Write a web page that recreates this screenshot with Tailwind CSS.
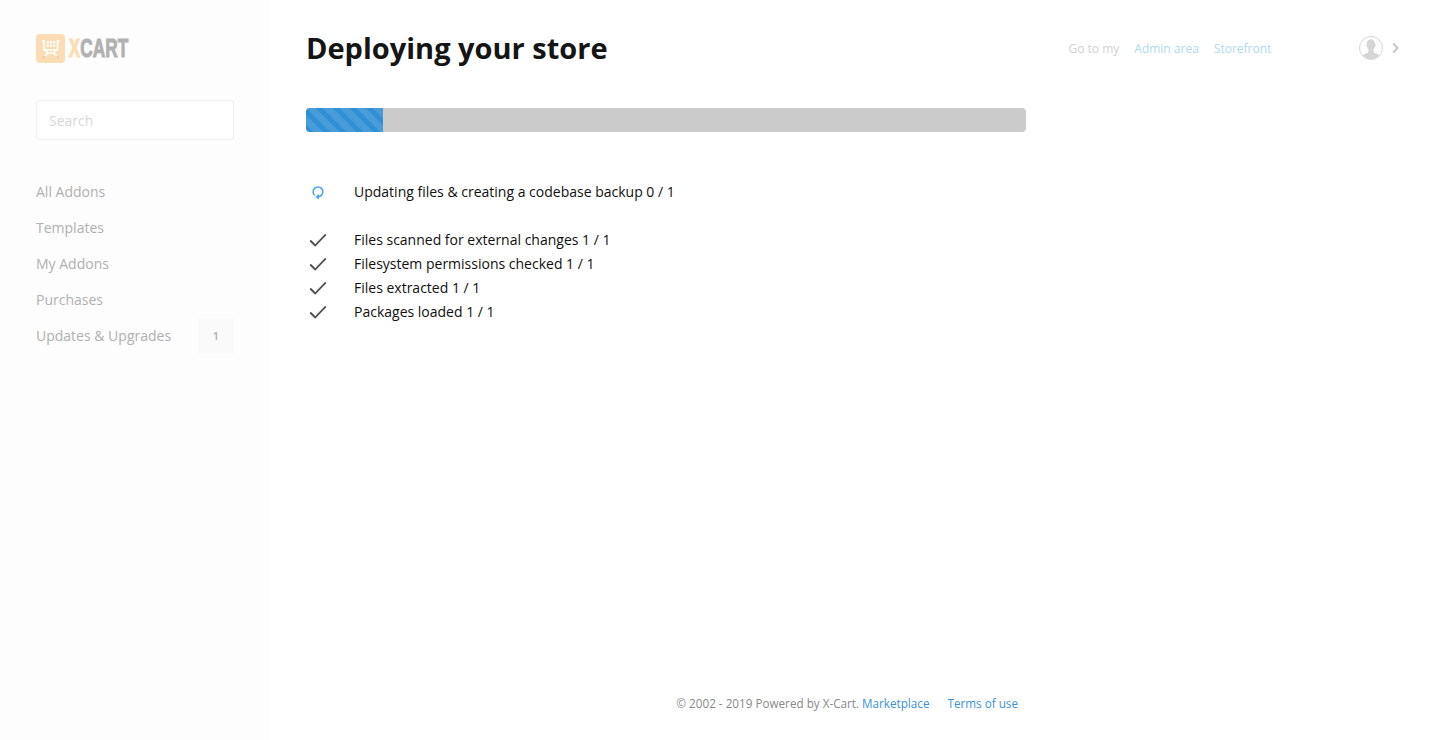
<!DOCTYPE html>
<html lang="en">
<head>
<meta charset="utf-8">
<title>Deploying your store</title>
<script src="https://cdn.jsdelivr.net/npm/@tailwindcss/browser@4"></script>
</head>
<body class="flex h-[740px] w-[1440px] overflow-hidden bg-white font-['Open_Sans',sans-serif] text-sm text-[#0f0f0f]">
<aside class="w-[270px] shrink-0 bg-[#fdfdfd] pl-9 pr-9 pt-[34px] text-[#b0b0b0]">
  <svg class="block" width="98" height="29" viewBox="0 0 98 29">
    <rect width="29" height="29" rx="4" fill="#fbdcb3"/>
    <path d="M6 6.800h2v9h13.500v-9h2M9 16l2.800 3-3.500 3.500M20.500 16l-2.800 3 3.500 3.500M11.500 19h6.500" fill="none" stroke="#fff" stroke-width="1.700"/>
    <path d="M10.600 8.200h8.600M10.600 11.600h8.600" stroke="#fff" stroke-width="2.400" stroke-dasharray="2.200 1"/>
    <circle cx="7.800" cy="23" r="1.200" fill="#f3c7ae"/><circle cx="21.700" cy="23" r="1.200" fill="#f3c7ae"/>
    <g font-family="Liberation Sans Narrow, Liberation Sans" font-weight="700" font-size="25" stroke-width="1">
      <text transform="translate(33 23.300) scale(.66 1)" fill="#fbdcb3" stroke="#fbdcb3">X</text>
      <text transform="translate(44.300 23.300) scale(.69 1)" fill="#b1b1b1" stroke="#b1b1b1">CART</text>
    </g>
  </svg>
  <div class="mt-[37px] flex h-10 w-[198px] items-center rounded-[3px] border border-[#eeeeee] bg-white px-3 pt-px text-[#d8d8d8]">Search</div>
  <nav class="mt-[34px] leading-9">
    <div>All Addons</div><div>Templates</div><div>My Addons</div><div>Purchases</div>
    <div class="flex justify-between"><span>Updates &amp; Upgrades</span><span class="w-9 rounded-[3px] bg-[#fafafa] text-center text-[11px] font-semibold">1</span></div>
  </nav>
</aside>
<main class="flex w-[756px] flex-col pl-9">
  <h1 class="mt-7 text-[29px] leading-10 font-bold text-[#151515]">Deploying your store</h1>
  <div class="mt-10 h-6 w-[720px] overflow-hidden rounded bg-[#cbcbcb]">
    <div class="h-6 w-[77px] bg-[repeating-linear-gradient(45deg,#489dd9_0px,#318fd6_0.5px,#318fd6_5px,#489dd9_5.5px,#489dd9_11.8px)]"></div>
  </div>
  <div class="mt-12 flex h-6 items-center">
    <svg class="mr-6" width="24" height="24" viewBox="0 0 24 24" fill="none" stroke="#4ba0ff" stroke-width="1.5"><path d="M8.700 15.400A4.900 4.900 0 1 1 15.300 15.400Q14 16.600 12 16.800"/><path d="M9.300 16.900l3.600-2.800v5.400z" fill="#4ba0ff" stroke="none"/></svg>
    <span>Updating files &amp; creating a codebase backup 0 / 1</span>
  </div>
  <div class="mt-6 leading-6">
    <div class="flex"><svg class="mr-6" width="24" height="24" fill="none" stroke="#4d4d4d" stroke-width="1.800"><path d="M4.200 12.500l5 5L19.800 6.300"/></svg>Files scanned for external changes 1 / 1</div>
    <div class="flex"><svg class="mr-6" width="24" height="24" fill="none" stroke="#4d4d4d" stroke-width="1.800"><path d="M4.200 12.500l5 5L19.800 6.300"/></svg>Filesystem permissions checked 1 / 1</div>
    <div class="flex"><svg class="mr-6" width="24" height="24" fill="none" stroke="#4d4d4d" stroke-width="1.800"><path d="M4.200 12.500l5 5L19.800 6.300"/></svg>Files extracted 1 / 1</div>
    <div class="flex"><svg class="mr-6" width="24" height="24" fill="none" stroke="#4d4d4d" stroke-width="1.800"><path d="M4.200 12.500l5 5L19.800 6.300"/></svg>Packages loaded 1 / 1</div>
  </div>
  <footer class="mt-auto mb-[25px] flex justify-end pr-2 text-[11.700px] leading-6 text-[#888]">
    <span>© 2002 - 2019 Powered by X-Cart.</span><a class="ml-[3px] text-[#3a93d8]">Marketplace</a><a class="ml-[18px] text-[#3a93d8]">Terms of use</a>
  </footer>
</main>
<header class="flex h-24 flex-1 items-center pl-[42.500px] text-xs text-[#d1d1d1]">
  <span class="pt-0.5">Go to my</span><a class="ml-[15px] pt-0.5 text-[#addaf3]">Admin area</a><a class="ml-[15px] pt-0.5 text-[#addaf3]">Storefront</a>
  <svg class="mr-[39px] ml-auto" width="43" height="26" viewBox="0 0 43 26">
    <circle cx="13" cy="13" r="11.500" fill="#fff" stroke="#d5d5d5"/>
    <path d="M8.800 9c0-6.500 8.400-6.500 8.400 0 .6.6.4 2.500-.4 3-.3 1.500-.8 2-1.200 2.500V17c1 1.500 4 1.500 5.600 3.600a11 11 0 0 1-16.400 0C6.400 18.500 9.400 18.500 10.400 17v-2.500c-.4-.5-.9-1-1.200-2.500-.8-.5-1-2.400-.4-3z" fill="#d5d5d5"/>
    <path d="M35.200 8.500l4.300 4.500-4.300 4.500" fill="none" stroke="#c8c8c8" stroke-width="2"/>
  </svg>
</header>
</body>
</html>
